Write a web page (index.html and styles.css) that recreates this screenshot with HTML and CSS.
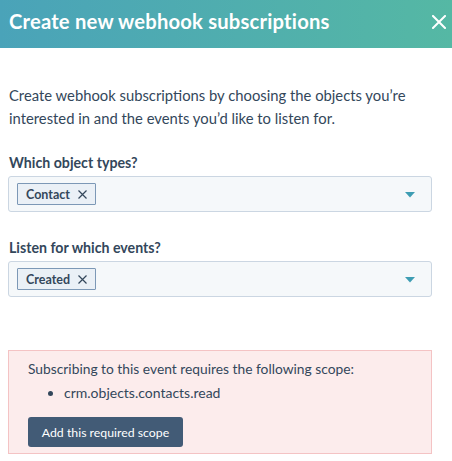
FILE: index.html
```html
<!DOCTYPE html>
<html>
<head>
<meta charset="utf-8">
<link rel="stylesheet" href="styles.css">
</head>
<body>
<div class="modal">
  <header class="modal-header">
    <h1 class="modal-title">Create new webhook subscriptions</h1>
    <svg class="close" width="14" height="14" viewBox="0 0 14 14"><path d="M1 1L13 13M13 1L1 13" stroke="#fff" stroke-width="2" stroke-linecap="square"/></svg>
  </header>
  <div class="modal-body">
    <p class="intro">Create webhook subscriptions by choosing the objects you’re interested in and the events you’d like to listen for.</p>
    <div class="field first">
      <label class="label">Which object types?</label>
      <div class="select">
        <span class="tag">Contact <svg class="tag-x" width="9" height="9" viewBox="0 0 9 9"><path d="M0.5 0.5L8.5 8.5M8.5 0.5L0.5 8.5" stroke="#33475b" stroke-width="1.2"/></svg></span>
        <svg class="caret" width="10" height="6" viewBox="0 0 10 6"><path d="M0 0H10L5 5.5Z" fill="#3e9db3"/></svg>
      </div>
    </div>
    <div class="field">
      <label class="label">Listen for which events?</label>
      <div class="select">
        <span class="tag">Created <svg class="tag-x" width="9" height="9" viewBox="0 0 9 9"><path d="M0.5 0.5L8.5 8.5M8.5 0.5L0.5 8.5" stroke="#33475b" stroke-width="1.2"/></svg></span>
        <svg class="caret" width="10" height="6" viewBox="0 0 10 6"><path d="M0 0H10L5 5.5Z" fill="#3e9db3"/></svg>
      </div>
    </div>
    <div class="alert">
      <p class="alert-text">Subscribing to this event requires the following scope:</p>
      <ul class="scopes"><li>crm.objects.contacts.read</li></ul>
      <button class="btn">Add this required scope</button>
    </div>
  </div>
</div>
</body>
</html>
```
FILE: styles.css
```css
* { box-sizing: border-box; }
body {
  margin: 0;
  background: #fff;
  font-family: "Lato", "Noto Sans", sans-serif;
  color: #33475b;
}
.modal-header {
  height: 48px;
  display: flex;
  align-items: center;
  justify-content: space-between;
  padding: 0 6px 6px 9px;
  background: linear-gradient(to right, #4aa3b9, #55b8a4);
}
.modal-title {
  margin: 0;
  color: #fff;
  font-size: 20.2px;
  font-weight: 700;
  letter-spacing: 0.2px;
}
.close { margin-top: 2px; }
.modal-body {
  padding: 0 20px 0 8px;
}
.intro {
  margin: 0;
  padding: 36px 0 0 1px;
  font-size: 14.8px;
  line-height: 23px;
}
.field {
  display: flex;
  flex-direction: column;
}
.field.first { margin-top: 23px; }
.field + .field { margin-top: 26px; }
.label {
  display: block;
  padding-left: 1px;
  font-size: 14.2px;
  font-weight: 700;
  line-height: 20px;
  margin-bottom: 3px;
}
.select {
  height: 36px;
  display: flex;
  align-items: center;
  justify-content: space-between;
  padding: 0 16px 0 8px;
  background: #f5f8fa;
  border: 1px solid #cbd6e2;
  border-radius: 3px;
}
.tag {
  display: inline-flex;
  align-items: center;
  gap: 8px;
  height: 22px;
  padding: 0 8px 0 8px;
  background: #eaf0f6;
  border: 1px solid #7c98b6;
  border-radius: 1px;
  font-size: 12.5px;
  font-weight: 700;
}
.caret { margin-top: 2px; }
.alert {
  margin-top: 53px;
  height: 104px;
  padding: 8px 20px 0 19px;
  background: #fcecec;
  border: 1px solid #f4c3c4;
}
.alert-text {
  margin: 0;
  font-size: 13.8px;
  line-height: 20px;
}
.scopes {
  margin: 4px 0 0 0;
  padding-left: 36px;
  font-size: 14px;
  line-height: 20px;
}
.btn {
  margin-top: 14px;
  height: 30px;
  width: 155px;
  background: #425b76;
  color: #fff;
  border: none;
  border-radius: 3px;
  font-family: inherit;
  font-size: 12.3px;
}
```
